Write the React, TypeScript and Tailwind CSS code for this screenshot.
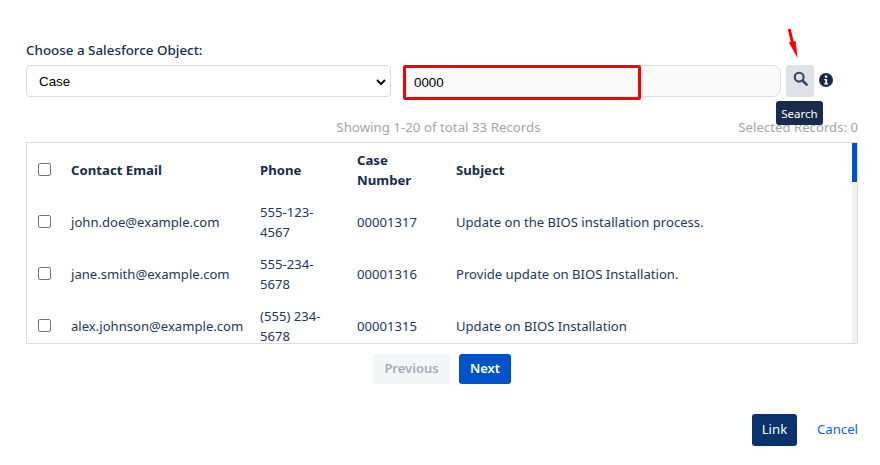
import React from "react";

const rows = [
  { email: "john.doe@example.com", phone: "555-123-4567", num: "00001317", subject: "Update on the BIOS installation process." },
  { email: "jane.smith@example.com", phone: "555-234-5678", num: "00001316", subject: "Provide update on BIOS Installation." },
  { email: "alex.johnson@example.com", phone: "(555) 234-5678", num: "00001315", subject: "Update on BIOS Installation" },
];

function Check() {
  return <span className="block w-[13px] h-[13px] rounded-[2px] border border-[#767676] bg-white" />;
}

export default function App() {
  return (
    <div className="relative w-[880px] h-[465px] bg-white overflow-hidden pl-[26px] pr-[22px] pt-[42px] font-['Noto_Sans','Open_Sans',sans-serif] text-[#172b4d]">
      <div className="text-[13.4px] leading-[17px] font-medium text-[#172b4d]">Choose a Salesforce Object:</div>
      <div className="flex mt-[6px] items-start">
        <div className="relative w-[365px] h-[32px] rounded-[4px] border border-[#dcdcdc] bg-white flex items-center justify-between pl-[12px] pr-[4px] pt-[1px] font-['Liberation_Sans',sans-serif] text-[13.33px] text-black">
          <span>Case</span>
          <svg width="10" height="8" viewBox="0 0 10 8" fill="none"><path d="M1 2l4 4 4-4" stroke="#111" strokeWidth="2" /></svg>
        </div>
        <div className="relative ml-[12px] w-[378px] h-[32px] rounded-[8px] border border-[#dfdfdf] bg-[#fafafa]">
          <div className="absolute left-[-1px] top-[-1px] w-[238px] h-[35px] border-[3px] border-[#ff0000] rounded-[2px] flex items-center pl-[8px] font-['Liberation_Sans',sans-serif] text-[13.33px] text-black">0000</div>
        </div>
        <button className="ml-[5px] w-[28px] h-[32px] rounded-[3px] bg-[#dfe1e6] flex items-center justify-center pb-[5px]">
          <svg width="15" height="15" viewBox="0 0 16 16" fill="none">
            <circle cx="6.6" cy="6.6" r="4.7" stroke="#344563" strokeWidth="2.3" />
            <path d="M10.2 10.2l4.3 4.3" stroke="#344563" strokeWidth="2.8" strokeLinecap="round" />
          </svg>
        </button>
        <svg className="ml-[5px] mt-[8px]" width="14" height="14" viewBox="0 0 14 14">
          <circle cx="7" cy="7" r="7" fill="#172b4d" />
          <circle cx="7" cy="3.6" r="1.3" fill="#fff" />
          <path d="M5.2 6h2.9v4.2h1v1.2H5.2v-1.2h1.1V7.2H5.2z" fill="#fff" />
        </svg>
      </div>

      <div className="relative mt-[20px] h-[20px] text-[13.3px] leading-[20px] text-[#a5a5a5]">
        <div className="text-center pr-[7px]">Showing 1-20 of total 33 Records</div>
        <div className="absolute right-0 top-0 text-[13.2px]">Selected Records: 0</div>
      </div>

      <div className="relative mt-[5px] h-[202px] border border-[#dcdcdc] overflow-hidden">
        <table className="w-[825px] table-fixed border-collapse text-left text-[13.1px] leading-[20px] text-[#253858]">
          <colgroup>
            <col className="w-[36px]" />
            <col className="w-[189px]" />
            <col className="w-[97px]" />
            <col className="w-[99px]" />
            <col />
          </colgroup>
          <thead>
            <tr className="h-[53px] text-[#172b4d] text-[13.2px]">
              <th className="pl-[11px]"><Check /></th>
              <th className="px-[8px] font-bold">Contact Email</th>
              <th className="px-[8px] font-bold">Phone</th>
              <th className="px-[8px] font-bold">Case Number</th>
              <th className="px-[8px] font-bold">Subject</th>
            </tr>
          </thead>
          <tbody>
            {rows.map((r) => (
              <tr key={r.num} className="h-[52px]">
                <td className="pl-[11px] pb-[2px]"><Check /></td>
                <td className="px-[8px] whitespace-nowrap">{r.email}</td>
                <td className="px-[8px]">{r.phone}</td>
                <td className="px-[8px]">{r.num}</td>
                <td className="px-[8px]">{r.subject}</td>
              </tr>
            ))}
          </tbody>
        </table>
        <div className="absolute right-0 top-0 bottom-0 w-[5px] bg-[#f1f1f1]">
          <div className="h-[39px] bg-[#0052cc]" />
        </div>
      </div>

      <div className="flex justify-center gap-[9px] mt-[10px] text-[13px] font-semibold">
        <button className="w-[77px] h-[30px] rounded-[3px] bg-[#f4f5f7] text-[#a5adba]">Previous</button>
        <button className="w-[52px] h-[30px] rounded-[3px] bg-[#0052cc] text-white">Next</button>
      </div>

      <div className="flex justify-end items-center mt-[30px] text-[13.2px]">
        <button className="w-[45px] h-[32px] rounded-[3px] bg-[#0a326d] text-white">Link</button>
        <span className="ml-[20px] text-[#0065ff]">Cancel</span>
      </div>

      <svg className="absolute left-[785px] top-[27px]" width="16" height="32" viewBox="0 0 16 32">
        <path d="M4.3 2l3.4 15" stroke="#ff0000" strokeWidth="3" />
        <path d="M3.8 15.5l6.8-1.5 2 17z" fill="#ff0000" />
      </svg>

      <div className="absolute left-[776px] top-[101px] w-[47px] h-[24px] pt-[1px] rounded-[3px] bg-[#172b4d] text-white text-[11.5px] flex items-center justify-center">Search</div>
    </div>
  );
}
